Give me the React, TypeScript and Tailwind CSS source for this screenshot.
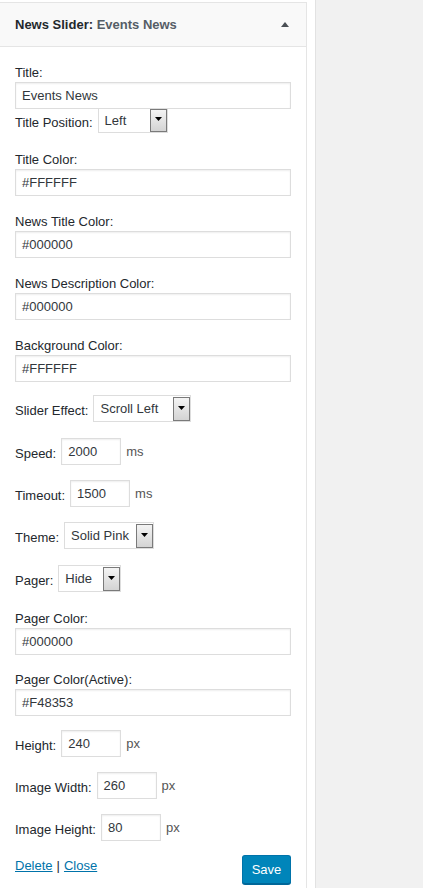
import React from 'react';

const font = { fontFamily: '"Liberation Sans", Arial, sans-serif' };

function TextField({ label, value, className = '' }: { label: string; value: string; className?: string }) {
  return (
    <div className={className}>
      <div className="h-[18px] leading-[18px]">{label}</div>
      <div className="h-[27px] w-[276px] border border-[#dddddd] bg-white shadow-[inset_0_1px_2px_rgba(0,0,0,0.07)] pl-[6px] leading-[25px] text-[#32373c]">
        {value}
      </div>
    </div>
  );
}

function Arrow() {
  return (
    <div className="h-full w-[17px] flex items-center justify-center border border-[#7a7a7a] bg-gradient-to-b from-[#f4f4f4] to-[#d4d4d4]">
      <svg width="7" height="4" viewBox="0 0 7 4" className="-mt-[3px]">
        <path d="M0 0h7L3.5 4z" fill="#000" />
      </svg>
    </div>
  );
}

function Select({ value, width, noTop = false }: { value: string; width: string; noTop?: boolean }) {
  return (
    <div
      className={`flex items-stretch bg-white border border-[#dddddd] ${noTop ? 'border-t-0 h-[24px]' : 'h-[27px] pt-px'} ${width}`}
    >
      <span className="flex-1 pl-[6px] self-center text-[#32373c] whitespace-nowrap">{value}</span>
      <Arrow />
    </div>
  );
}

function NumRow({ label, value, unit, className = '' }: { label: string; value: string; unit: string; className?: string }) {
  return (
    <div className={`flex items-center h-[27px] ${className}`}>
      <span className="pt-[4px] mr-[5px] whitespace-nowrap">{label}</span>
      <div className="h-[27px] w-[60px] border border-[#dddddd] bg-white shadow-[inset_0_1px_2px_rgba(0,0,0,0.07)] pl-[6px] leading-[25px] text-[#32373c]">
        {value}
      </div>
      <span className="ml-[5px] text-[#555]">{unit}</span>
    </div>
  );
}

function SelectRow({ label, value, width, className = '' }: { label: string; value: string; width: string; className?: string }) {
  return (
    <div className={`flex items-center h-[27px] ${className}`}>
      <span className="pt-[4px] mr-[5px] whitespace-nowrap">{label}</span>
      <Select value={value} width={width} />
    </div>
  );
}

export default function App() {
  return (
    <div className="flex h-[888px] w-[423px] bg-white overflow-hidden text-[13px] text-[#23282d]" style={font}>
      <div className="w-[307px] mt-[2px] border-t border-r border-[#e5e5e5] bg-white">
        {/* widget header */}
        <div className="h-[44px] flex items-center justify-between bg-[#f9f9f9] border-b border-[#e5e5e5] pl-[15px] pr-[17px]">
          <div className="font-bold">
            News Slider: <span className="text-[#555d66]">Events News</span>
          </div>
          <svg width="8" height="5" viewBox="0 0 8 5">
            <path d="M0 5h8L4 0z" fill="#4a4f55" />
          </svg>
        </div>

        <div className="px-[15px] pt-[17px]">
          <TextField label="Title:" value="Events News" />
          <div className="flex items-center h-[24px]">
            <span className="pt-[4px] mr-[5px]">Title Position:</span>
            <Select value="Left" width="w-[70px]" noTop />
          </div>

          <TextField className="mt-[18px]" label="Title Color:" value="#FFFFFF" />
          <TextField className="mt-[17px]" label="News Title Color:" value="#000000" />
          <TextField className="mt-[17px]" label="News Description Color:" value="#000000" />
          <TextField className="mt-[17px]" label="Background Color:" value="#FFFFFF" />

          <SelectRow className="mt-[13px]" label="Slider Effect:" value="Scroll Left" width="w-[98px]" />
          <NumRow className="mt-[16px]" label="Speed:" value="2000" unit="ms" />
          <NumRow className="mt-[15px]" label="Timeout:" value="1500" unit="ms" />
          <SelectRow className="mt-[15px]" label="Theme:" value="Solid Pink" width="w-[90px]" />
          <SelectRow className="mt-[16px]" label="Pager:" value="Hide" width="w-[63px]" />

          <TextField className="mt-[18px]" label="Pager Color:" value="#000000" />
          <TextField className="mt-[16px]" label="Pager Color(Active):" value="#F48353" />

          <NumRow className="mt-[14px]" label="Height:" value="240" unit="px" />
          <NumRow className="mt-[15px]" label="Image Width:" value="260" unit="px" />
          <NumRow className="mt-[15px]" label="Image Height:" value="80" unit="px" />

          <div className="flex items-start justify-between w-[276px] mt-[14px]">
            <div className="pt-[1px]">
              <a className="text-[#0073aa] underline">Delete</a>
              <span className="mx-[4px]">|</span>
              <a className="text-[#0073aa] underline">Close</a>
            </div>
            <button className="h-[29px] w-[49px] rounded-[3px] bg-[#0085ba] border border-[#0073aa] border-b-[#006799] text-white shadow-[0_1px_0_#006799]">
              Save
            </button>
          </div>
        </div>
      </div>
      <div className="w-[8px]" />
      <div className="flex-1 bg-[#f1f1f1] border-l border-[#e2e2e2]" />
    </div>
  );
}
